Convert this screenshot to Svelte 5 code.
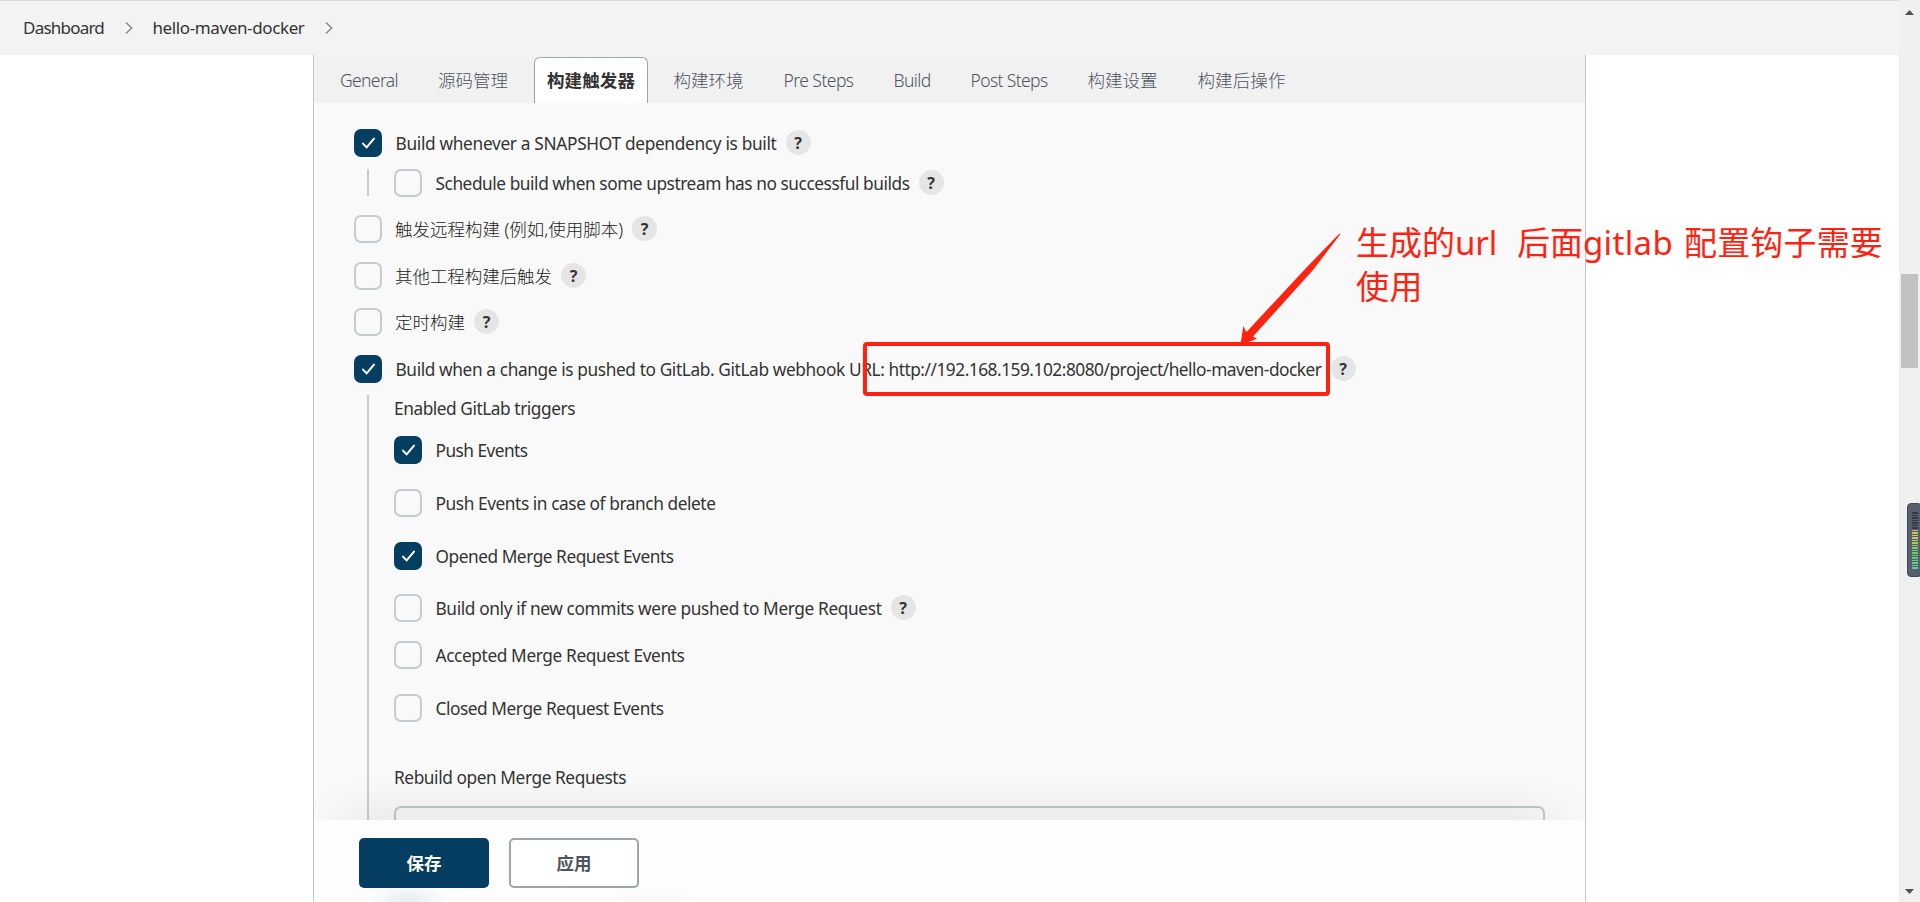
<script>
  const crumbs = [
    { text: 'Dashboard', w: 81 },
    { text: 'hello-maven-docker', w: 152 }
  ];

  const tabs = [
    { text: 'General', w: 58 },
    { text: '源码管理', w: 70, cjk: true },
    { text: '构建触发器', w: 88, cjk: true, active: true },
    { text: '构建环境', w: 70, cjk: true },
    { text: 'Pre Steps', w: 70 },
    { text: 'Build', w: 37 },
    { text: 'Post Steps', w: 77 },
    { text: '构建设置', w: 70, cjk: true },
    { text: '构建后操作', w: 88, cjk: true }
  ];

  const remote = [
    { parts: [['触发远程构建 (例如,使用脚本)', 228]] },
    { parts: [['其他工程构建后触发', 157]] },
    { parts: [['定时构建', 70]] }
  ];

  const snapshot = { parts: [['Build whenever a SNAPSHOT dependency is built', 381]], on: true, help: true };
  const schedule = { parts: [['Schedule build when some upstream has no successful builds', 474]], help: true };
  const gitlab = {
    parts: [
      ['Build when a change is pushed to GitLab. GitLab webhook URL:\u00a0', 493],
      ['http://192.168.159.102:8080/project/hello-maven-docker', 433]
    ],
    on: true,
    help: true
  };

  const events = [
    { parts: [['Push Events', 92]], on: true, h: 53 },
    { parts: [['Push Events in case of branch delete', 280]], h: 53 },
    { parts: [['Opened Merge Request Events', 238]], on: true, h: 52 },
    { parts: [['Build only if new commits were pushed to Merge Request', 446]], help: true, h: 47 },
    { parts: [['Accepted Merge Request Events', 249]], h: 53 },
    { parts: [['Closed Merge Request Events', 228]], h: 53 }
  ];

  const meter = Array.from({ length: 23 }, (_, i) =>
    i < 7 ? '#343948' : `hsl(${45 + (i - 7) * 7.5} 55% 58%)`
  );

  // Tracks the letters so that a label takes its design width.
  function fit(node, width) {
    const count = [...node.textContent].length;
    const natural = node.getBoundingClientRect().width;
    node.style.letterSpacing = `${(width - natural) / count}px`;
  }
</script>

{#snippet check(on)}
  <span class="box" class:on>
    {#if on}
      <svg width="28" height="28" viewBox="0 0 28 28"><path d="M9 14.6l3.6 3.8L20 9.6" /></svg>
    {/if}
  </span>
{/snippet}

{#snippet option(item)}
  {@render check(item.on)}
  <span class="label">{#each item.parts as [text, w]}<span use:fit={w}>{text}</span>{/each}</span>
  {#if item.help}<span class="help">?</span>{/if}
{/snippet}

<div class="page">
  <div class="main">
    <header>
      {#each crumbs as c}
        <span class="crumb" style:width="{c.w}px"><span use:fit={c.w}>{c.text}</span></span>
        <svg class="chev" width="8" height="14" viewBox="0 0 8 14"><path d="M1 1.5l5.7 5.5L1 12.5" /></svg>
      {/each}
    </header>

    <div class="panel">
      <nav>
        {#each tabs as t}
          <span class="tab" class:cjk={t.cjk} class:active={t.active}><span use:fit={t.w}>{t.text}</span></span>
        {/each}
      </nav>

      <section>
        <div class="row first">{@render option(snapshot)}</div>
        <div class="nested short">
          <div class="row">{@render option(schedule)}</div>
        </div>
        {#each remote as r}
          <div class="row cjk step">{@render option({ ...r, help: true })}</div>
        {/each}
        <div class="row">{@render option(gitlab)}</div>
        <div class="nested long">
          <div class="caption"><span use:fit={181}>Enabled GitLab triggers</span></div>
          {#each events as e}
            <div class="event" style:height="{e.h}px"><div class="row">{@render option(e)}</div></div>
          {/each}
          <div class="caption rebuild"><span use:fit={232}>Rebuild open Merge Requests</span></div>
          <div class="select"></div>
        </div>
      </section>

      <footer>
        <button class="save">保存</button>
        <button class="apply">应用</button>
      </footer>
    </div>
  </div>

  <aside class="scroll">
    <svg width="9" height="5" viewBox="0 0 9 5"><path d="M0 5L4.5 0L9 5z" /></svg>
    <div class="thumb"></div>
    <svg width="9" height="5" viewBox="0 0 9 5"><path d="M0 0L4.5 5L9 0z" /></svg>
  </aside>

  <div class="meter">
    {#each meter as color}<i style:background={color}></i>{/each}
  </div>

  <div class="frame"></div>
  <svg class="arrow" width="110" height="120" viewBox="1235 230 110 120">
    <path d="M1340.5 234L1339 234L1307 267L1246.5 332L1243.3 326L1240.5 345L1257 338.7L1253 336.5L1313 270z" />
  </svg>
  <div class="note">
    <div>
      <span use:fit={99}>生成的</span>
      <span use:fit={42}>url</span>
      <span class="n2" use:fit={66}>后面</span>
      <span use:fit={90}>gitlab</span>
      <span class="n3" use:fit={199}>配置钩子需要</span>
    </div>
    <div><span use:fit={67}>使用</span></div>
  </div>
</div>

<style>
  :global(body) { background: #fff; overflow: hidden; }
  .page {
    position: relative;
    display: flex;
    width: 1920px;
    height: 902px;
    overflow: hidden;
    box-sizing: border-box;
    font-family: 'Noto Sans', 'Noto Sans CJK SC', sans-serif;
    font-size: 17.3px;
    color: #333;
    white-space: nowrap;
  }
  .page * { box-sizing: border-box; }
  .main { width: 1899px; display: flex; flex-direction: column; }

  header {
    height: 55px;
    flex: none;
    display: flex;
    align-items: center;
    gap: 20px;
    padding: 0 23px;
    border-top: 1px solid #d9d9d9;
    background: #f3f3f3;
    font-size: 17px;
  }
  .crumb { flex: none; padding-bottom: 1px; }
  .chev { flex: none; margin-left: 0.5px; }
  .chev path { fill: none; stroke: #8c8c8c; stroke-width: 1.5; }

  .panel {
    width: 1273px;
    height: 847px;
    margin-left: 313px;
    display: flex;
    flex-direction: column;
    border: solid #bfc8cd;
    border-width: 0 1px;
    background: #f9f9f9;
  }
  nav {
    height: 48px;
    flex: none;
    display: flex;
    align-items: flex-end;
    gap: 14px;
    padding-left: 13px;
    background: #f1f1f1;
    color: #4d545d;
    font-size: 17.5px;
  }
  .tab {
    height: 46px;
    padding: 0 13px;
    line-height: 46px;
    font-weight: 300;
  }
  .tab.cjk { font-family: 'Noto Sans CJK SC', sans-serif; line-height: 45px; }
  .tab.active {
    margin-left: -1px;
    margin-right: -1.5px;
    padding: 0 12px;
    border: 1px solid #98a6b0;
    border-bottom: 0;
    border-radius: 6px 6px 0 0;
    background: #fff;
    color: #333;
    font-weight: 700;
    line-height: 43px;
  }

  section { height: 717px; overflow: hidden; padding: 26px 40px 0; }
  .row { display: flex; height: 28px; }
  .first { margin-bottom: 12px; }
  .step { margin-bottom: 18.6px; }
  .box {
    width: 28px;
    height: 28px;
    flex: none;
    border: 2px solid #c3ccd1;
    border-radius: 7px;
  }
  .box.on { border: 0; background: #063e61; }
  .box svg { display: block; }
  .box path { fill: none; stroke: #fff; stroke-width: 2; stroke-linecap: round; stroke-linejoin: round; }
  .label { margin-left: 13.5px; line-height: 30px; }
  .cjk .label { margin-left: 13px; font-size: 17.5px; font-weight: 300; line-height: 28px; color: #222; }
  .help {
    width: 25px;
    height: 25px;
    margin: 1px 0 0 9px;
    border-radius: 50%;
    background: #e5e5e5;
    text-align: center;
    font-size: 16px;
    font-weight: 700;
    line-height: 26px;
  }

  .nested { margin-left: 13px; padding-left: 25px; border-left: 2px solid #c3ccd1; }
  .short { height: 27px; margin-bottom: 19px; }
  .long { height: 440px; margin-top: 12px; }
  .caption { height: 41px; line-height: 28px; }
  .event { display: block; }
  .rebuild { padding-top: 17px; height: 59px; }
  .select { width: 1151px; height: 60px; border: 2px solid #bfc8cd; border-radius: 7px; background: #f9f9f9; }

  footer {
    position: relative;
    height: 82px;
    display: flex;
    gap: 20px;
    padding: 18px 45px;
    background:
      radial-gradient(ellipse 40px 18px at 94px 82px, rgba(6, 62, 97, 0.09), transparent),
      radial-gradient(ellipse 50px 16px at 340px 82px, rgba(0, 0, 0, 0.025), transparent),
      #fdfdfd;
  }
  footer::before {
    content: '';
    position: absolute;
    left: 0;
    right: 0;
    bottom: 100%;
    height: 50px;
    background: linear-gradient(to top, rgba(0, 0, 0, 0.05), transparent 80%);
    mask-image: linear-gradient(to right, transparent, #000 70px, #000 1200px, transparent);
  }
  button {
    width: 130px;
    height: 50px;
    padding: 0 0 1px;
    border-radius: 5px;
    font: 700 17.5px 'Noto Sans CJK SC', sans-serif;
  }
  .save { border: 0; background: #063e61; color: #fff; }
  .apply { border: 2px solid #9aa6b0; background: #fff; color: #4d545d; }

  .scroll {
    width: 21px;
    display: flex;
    flex-direction: column;
    align-items: center;
    padding: 10px 0 8px;
    background: #f0f0f0;
  }
  .scroll path { fill: #505050; }
  .scroll svg { flex: none; }
  .thumb { width: 17px; height: 94px; margin: 259px 0 521px; flex: none; background: #c1c1c1; }

  .meter {
    position: absolute;
    left: 1907px;
    top: 503px;
    width: 15px;
    height: 74px;
    padding: 8px 0 0 4px;
    border: 1px solid #444a57;
    border-radius: 4px;
    background: #575e6e;
  }
  .meter i { display: block; width: 6px; height: 1.5px; margin-bottom: 1px; }

  .frame {
    position: absolute;
    left: 863px;
    top: 342px;
    width: 467px;
    height: 54px;
    border: 4px solid #ff2211;
    border-radius: 4px;
  }
  .arrow { position: absolute; left: 1235px; top: 230px; }
  .arrow path { fill: #ff2211; }
  .note {
    position: absolute;
    left: 1356px;
    top: 221px;
    font-size: 33px;
    line-height: 44px;
    color: #ff2211;
  }
  .note div { display: flex; }
  .n2 { margin-left: 20px; }
  .n3 { margin-left: 11px; }
</style>
